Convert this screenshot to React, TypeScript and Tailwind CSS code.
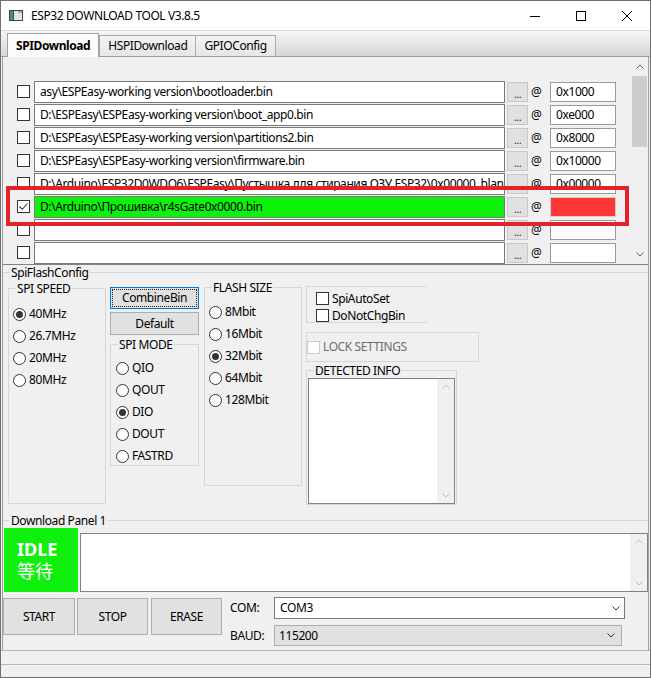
import React from "react";

const FONT = "font-['Noto_Sans','Noto_Sans_CJK_SC',sans-serif]";

function Chevron({ up = false, color = "#606060" }: { up?: boolean; color?: string }) {
  return (
    <svg width="8" height="5" viewBox="0 0 8 5">
      <path d={up ? "M0.5 4.5 L4 1 L7.5 4.5" : "M0.5 0.5 L4 4 L7.5 0.5"} stroke={color} strokeWidth="1" fill="none" />
    </svg>
  );
}

function Check({ checked = false, disabled = false }: { checked?: boolean; disabled?: boolean }) {
  return (
    <div
      className={`w-[13px] h-[13px] shrink-0 border bg-white flex items-center justify-center ${
        disabled ? "border-[#cccccc]" : "border-[#333333]"
      }`}
    >
      {checked && (
        <svg width="11" height="11" viewBox="0 0 11 11">
          <path d="M1.5 5.5 L4.3 8.3 L9.5 2.5" stroke="#333333" strokeWidth="1.1" fill="none" />
        </svg>
      )}
    </div>
  );
}

function Radio({ checked = false, label }: { checked?: boolean; label: string }) {
  return (
    <div className="flex items-center h-[22px]">
      <div className="w-[13px] h-[13px] shrink-0 rounded-full border border-[#333333] bg-white flex items-center justify-center">
        {checked && <div className="w-[7px] h-[7px] rounded-full bg-[#333333]" />}
      </div>
      <span className="ml-[3px] leading-none">{label}</span>
    </div>
  );
}

function FileRow({
  path,
  addr,
  checked = false,
  highlight = false,
}: {
  path: string;
  addr: string;
  checked?: boolean;
  highlight?: boolean;
}) {
  return (
    <div className="flex items-center h-[23px]">
      <div className="ml-[14px] mr-[4px]">
        <Check checked={checked} />
      </div>
      <div
        className={`w-[471px] h-[22px] shrink-0 border border-[#7a7a7a] pl-[5px] flex items-center overflow-hidden whitespace-nowrap ${
          highlight ? "bg-[#0cf20c]" : "bg-white"
        }`}
      >
        <span className="shrink-0">{path}</span>
      </div>
      <div className="ml-[2px] w-[21px] h-[20px] bg-[#e1e1e1] border border-[#c8c8c8] flex items-end justify-center pb-[2px] text-[11px] leading-none text-[#333333]">
        ...
      </div>
      <span className="ml-[3px] w-[19px] text-[12px]">@</span>
      <div
        className={`w-[66px] h-[20px] border border-[#9a9a9a] flex items-center pl-[5px] ${
          highlight ? "bg-[#ff3434] border-[#d0d0d0]" : "bg-white"
        }`}
      >
        {addr}
      </div>
    </div>
  );
}

function Group({
  title,
  className = "",
  children,
}: {
  title?: string;
  className?: string;
  children?: React.ReactNode;
}) {
  return (
    <fieldset className={`border border-[#d6d6d6] min-w-0 ${className}`}>
      {title && <legend className="ml-[7px] px-[1px] leading-[15px]">{title}</legend>}
      {children}
    </fieldset>
  );
}

export default function App() {
  return (
    <div
      className={`w-[651px] h-[678px] bg-[#f0f0f0] border border-[#707070] flex flex-col text-[12px] tracking-[-0.4px] text-black overflow-hidden relative ${FONT}`}
    >
      {/* Title bar */}
      <div className="h-[29px] shrink-0 bg-white flex items-center">
        <svg className="ml-[8px]" width="14" height="11" viewBox="0 0 14 11">
          <rect x="0" y="0" width="14" height="11" fill="#3b4645" />
          <rect x="1" y="1" width="3" height="9" fill="#4f8c7c" />
          <rect x="5" y="1" width="8" height="9" fill="#dfe5e4" />
          <rect x="9" y="1" width="4" height="2" fill="#9aa8a6" />
        </svg>
        <span className="ml-[8px]">ESP32 DOWNLOAD TOOL V3.8.5</span>
        <div className="ml-auto flex items-center h-full">
          <div className="w-[46px] h-full flex items-center justify-center">
            <svg width="10" height="10" viewBox="0 0 10 10">
              <path d="M0 5.5 H10" stroke="#000" strokeWidth="1" />
            </svg>
          </div>
          <div className="w-[46px] h-full flex items-center justify-center">
            <svg width="10" height="10" viewBox="0 0 10 10">
              <rect x="0.5" y="0.5" width="9" height="9" stroke="#000" strokeWidth="1" fill="none" />
            </svg>
          </div>
          <div className="w-[46px] h-full flex items-center justify-center">
            <svg width="10" height="10" viewBox="0 0 10 10">
              <path d="M0 0 L10 10 M10 0 L0 10" stroke="#000" strokeWidth="1" />
            </svg>
          </div>
        </div>
      </div>

      {/* Tab strip */}
      <div className="h-[27px] shrink-0 border-t border-[#d9d9d9] border-b border-b-[#a0a0a0] bg-gradient-to-b from-[#f6f6f6] to-[#d6d6d6] flex items-end pl-[6px]">
        <div className="h-[24px] -mb-[1px] px-[8px] flex items-center bg-[#fbfbfb] border border-b-0 border-[#a0a0a0] font-bold relative">
          SPIDownload
        </div>
        <div className="h-[21px] px-[8px] flex items-center bg-gradient-to-b from-[#f3f3f3] to-[#e6e6e6] border border-b-0 border-[#acacac]">
          HSPIDownload
        </div>
        <div className="h-[21px] px-[8px] flex items-center bg-gradient-to-b from-[#f3f3f3] to-[#e6e6e6] border border-b-0 border-l-0 border-[#acacac]">
          GPIOConfig
        </div>
      </div>

      {/* Tab page */}
      <div className="flex-1 flex flex-col ml-[1px] mr-[1px] border-l border-r border-[#a0a0a0] relative">
        {/* file rows panel */}
        <div className="h-[208px] shrink-0 flex border-b border-[#828282]">
          <div className="flex-1 pt-[23px] flex flex-col">
            <FileRow path={"asy\\ESPEasy-working version\\bootloader.bin"} addr="0x1000" />
            <FileRow path={"D:\\ESPEasy\\ESPEasy-working version\\boot_app0.bin"} addr="0xe000" />
            <FileRow path={"D:\\ESPEasy\\ESPEasy-working version\\partitions2.bin"} addr="0x8000" />
            <FileRow path={"D:\\ESPEasy\\ESPEasy-working version\\firmware.bin"} addr="0x10000" />
            <FileRow
              path={"D:\\Arduino\\ESP32D0WDQ6\\ESPEasy\\Пустышка для стирания ОЗУ ESP32\\0x00000_blan"}
              addr="0x00000"
            />
            <FileRow path={"D:\\Arduino\\Прошивка\\r4sGate0x0000.bin"} addr="" checked highlight />
            <FileRow path="" addr="" />
            <FileRow path="" addr="" />
          </div>
          <div className="w-[17px] shrink-0 bg-[#f0f0f0] flex flex-col items-center">
            <div className="h-[19px] flex items-center justify-center">
              <Chevron up />
            </div>
            <div className="w-[15px] h-[71px] bg-[#cdcdcd]" />
            <div className="flex-1" />
            <div className="h-[19px] flex items-center justify-center">
              <Chevron />
            </div>
          </div>
        </div>

        {/* SpiFlashConfig */}
        <Group title="SpiFlashConfig" className="h-[248px] shrink-0 border-x-0 border-b-0">
          <div className="flex items-start">
            {/* SPI SPEED */}
            <Group title="SPI SPEED" className="ml-[5px] w-[98px] h-[223px] mt-[1px]">
              <div className="pl-[4px] pt-[7px]">
                <Radio checked label="40MHz" />
                <Radio label="26.7MHz" />
                <Radio label="20MHz" />
                <Radio label="80MHz" />
              </div>
            </Group>

            {/* combine / default / spi mode */}
            <div className="ml-[4px] w-[89px] flex flex-col mt-[7px]">
              <div className="h-[22px] border border-[#0078d7] bg-[#e1e1e1] p-[1px]">
                <div className="w-full h-full border border-dotted border-[#222] flex items-center justify-center">
                  CombineBin
                </div>
              </div>
              <div className="mt-[3px] h-[23px] border border-[#adadad] bg-[#e1e1e1] flex items-center justify-center">
                Default
              </div>
              <Group title="SPI MODE" className="mt-[2px] h-[129px]">
                <div className="pl-[5px] pt-[5px]">
                  <Radio label="QIO" />
                  <Radio label="QOUT" />
                  <Radio checked label="DIO" />
                  <Radio label="DOUT" />
                  <Radio label="FASTRD" />
                </div>
              </Group>
            </div>

            {/* FLASH SIZE */}
            <Group title="FLASH SIZE" className="ml-[5px] w-[98px] h-[206px]">
              <div className="pl-[4px] pt-[6px]">
                <Radio label="8Mbit" />
                <Radio label="16Mbit" />
                <Radio checked label="32Mbit" />
                <Radio label="64Mbit" />
                <Radio label="128Mbit" />
              </div>
            </Group>

            {/* right column */}
            <div className="ml-[4px] flex flex-col mt-[6px]">
              <div className="w-[121px] h-[37px] border border-r-0 border-[#d6d6d6] pl-[9px] pt-[3px] flex flex-col">
                <div className="flex items-center h-[17px]">
                  <Check />
                  <span className="ml-[3px]">SpiAutoSet</span>
                </div>
                <div className="flex items-center h-[17px]">
                  <Check />
                  <span className="ml-[3px]">DoNotChgBin</span>
                </div>
              </div>
              <div className="mt-[9px] w-[173px] h-[30px] border border-[#d6d6d6] flex items-center pl-0">
                <Check disabled />
                <span className="ml-[3px] text-[#6d6d6d]">LOCK SETTINGS</span>
              </div>
              <Group title="DETECTED INFO" className="mt-[1px] w-[151px] h-[142px]">
                <div className="ml-[1px] w-[147px] h-[126px] bg-white border border-[#828282] flex justify-end">
                  <div className="w-[17px] h-full bg-[#f0f0f0] flex flex-col items-center justify-between py-[5px]">
                    <Chevron up color="#c0c0c0" />
                    <Chevron color="#c0c0c0" />
                  </div>
                </div>
              </Group>
            </div>
          </div>
        </Group>

        {/* Download Panel 1 */}
        <Group title="Download Panel 1" className="h-[80px] shrink-0 border-x-0 border-b-0">
          <div className="flex items-end">
            <div className="ml-[1px] w-[74px] h-[64px] bg-[#0ff00f] text-white flex flex-col justify-center pl-[13px] tracking-normal">
              <span className="text-[18px] font-bold leading-[22px]">IDLE</span>
              <span className="text-[18px] leading-[22px]">等待</span>
            </div>
            <div className="ml-[2px] flex-1 h-[59px] bg-white border border-[#828282] flex justify-end">
              <div className="w-[17px] h-full bg-[#f0f0f0] flex flex-col items-center justify-between py-[5px]">
                <Chevron up color="#c0c0c0" />
                <Chevron color="#c0c0c0" />
              </div>
            </div>
          </div>
        </Group>

        {/* Buttons / COM */}
        <div className="flex items-start mt-[4px]">
          <div className="mt-[1px] w-[72px] h-[37px] bg-[#e1e1e1] border border-[#adadad] flex items-center justify-center">
            START
          </div>
          <div className="mt-[1px] ml-[2px] w-[71px] h-[37px] bg-[#e1e1e1] border border-[#adadad] flex items-center justify-center">
            STOP
          </div>
          <div className="mt-[1px] ml-[3px] w-[71px] h-[37px] bg-[#e1e1e1] border border-[#adadad] flex items-center justify-center">
            ERASE
          </div>
          <div className="ml-[8px] flex flex-col">
            <div className="flex items-center h-[22px]">
              <span className="w-[44px]">COM:</span>
              <div className="w-[351px] h-[22px] bg-white border border-[#7a7a7a] flex items-center pl-[5px] pr-[4px]">
                <span className="flex-1">COM3</span>
                <Chevron color="#333333" />
              </div>
            </div>
            <div className="flex items-center h-[21px] mt-[6px]">
              <span className="w-[44px]">BAUD:</span>
              <div className="w-[348px] h-[21px] bg-[#e1e1e1] border border-[#adadad] flex items-center pl-[4px] pr-[6px]">
                <span className="flex-1">115200</span>
                <Chevron color="#333333" />
              </div>
            </div>
          </div>
        </div>

        {/* red annotation */}
        <div className="absolute left-[3px] top-[129px] w-[623px] h-[40px] border-4 border-[#e3222a] pointer-events-none" />
      </div>

      {/* status bars */}
      <div className="h-[14px] shrink-0 border-t border-[#b9b9b9]" />
      <div className="h-[13px] shrink-0 border-t border-[#b9b9b9]" />
    </div>
  );
}
